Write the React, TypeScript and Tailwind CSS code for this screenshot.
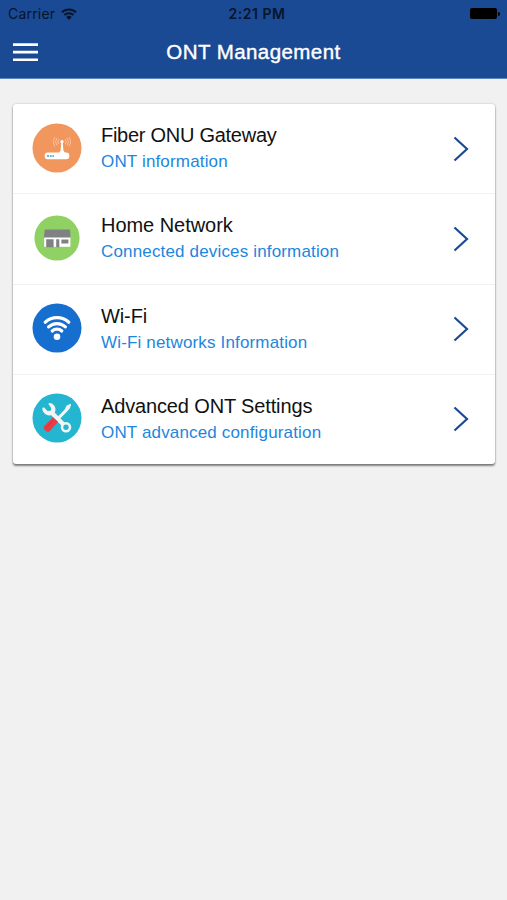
import type { ReactNode } from "react";

function WifiGlyph({ className }: { className: string }) {
  return (
    <svg viewBox="0 0 16 12" className={className} fill="none" stroke="currentColor" strokeWidth="2">
      <path d="M0.9 4.3a10.2 10.2 0 0 1 14.2 0" />
      <path d="M3.4 7a6.6 6.6 0 0 1 9.2 0" />
      <path d="M8 12 5.2 9.1a4 4 0 0 1 5.6 0z" fill="currentColor" stroke="none" />
    </svg>
  );
}

function RouterIcon() {
  return (
    <svg viewBox="0 0 50 50" className="size-[50px]">
      <circle cx="25" cy="25" r="24.5" fill="#f1965c" />
      <g fill="none" stroke="#fac7a5" strokeWidth="0.9">
        <path d="M26.8 16.2a4 4 0 0 0 0 5M33.2 16.2a4 4 0 0 1 0 5" />
        <path d="M24.9 15a6.4 6.4 0 0 0 0 7.4M35.1 15a6.4 6.4 0 0 1 0 7.4" />
        <path d="M23 14a8.6 8.6 0 0 0 0 9.4M37 14a8.6 8.6 0 0 1 0 9.4" />
      </g>
      <circle cx="30" cy="18.7" r="1.6" fill="#fff" />
      <path d="M29.3 19h1.4l.7 8.6 1.8 2.7h-6.4l1.8-2.7z" fill="#fff" />
      <rect x="12.7" y="29.6" width="24.6" height="6.6" rx="3" fill="#fff" />
      <path d="M15 32h2v1.9h-2z" fill="#5bbbe2" />
      <path d="M17.9 32h1.8v1.9h-1.8z" fill="#72a6da" />
      <path d="M20.3 32H22v1.9h-1.7z" fill="#7cc1c0" />
    </svg>
  );
}

function HouseIcon() {
  return (
    <svg viewBox="0 0 50 50" className="size-[50px]">
      <circle cx="25" cy="25" r="22.6" fill="#8fd163" />
      <path d="M12.2 24h26.2v9.8H12.2z" fill="#fff" />
      <path d="M12.7 16.5h25.3l.5 8H11.9z" fill="#808183" />
      <path d="M14.2 26.3h7.4v8h-7.4zM24.2 26.3h3.1v8h-3.1zM29.4 26.4h7v4h-7z" fill="#808183" />
    </svg>
  );
}

function WirelessIcon() {
  return (
    <svg viewBox="0 0 50 50" className="size-[50px]">
      <circle cx="25" cy="25" r="24.5" fill="#166fce" />
      <g fill="none" stroke="#fff" strokeWidth="3.2" strokeLinecap="round">
        <path d="M13.2 19.2a17.5 17.5 0 0 1 23.6 0" />
        <path d="M16.6 23.9a12.2 12.2 0 0 1 16.8 0" />
        <path d="M20.2 28a7 7 0 0 1 9.6 0" />
      </g>
      <circle cx="25" cy="33.7" r="3.3" fill="#fff" />
    </svg>
  );
}

function ToolsIcon() {
  return (
    <svg viewBox="0 0 50 50" className="size-[50px]">
      <circle cx="25" cy="25" r="24.5" fill="#24b5d0" />
      <path d="m18.5 18.5 14 14" stroke="#f3f4f5" strokeWidth="4.4" />
      <path
        d="M12.2 14.5c-.9-.3-1.9.1-1.9 1 .1 3.8 3.5 7 7.2 6.9 3.5 0 6-2.5 6-5.8 0-3.5-2.8-6.7-6.2-6.5-.8 0-1.1.8-.6 1.4l2.5 3.5-.5 2.7-3.3.4z"
        fill="#f3f4f5"
      />
      <circle cx="34" cy="34.2" r="4" fill="#24b5d0" stroke="#f3f4f5" strokeWidth="2.6" />
      <path d="M34.6 12.4 38.8 10.8 39 12l-1.2 3.4-3.2 3.6-8.8 8.9-2.1-2.1 8.8-9z" fill="#f3f4f5" />
      <path d="m21 24.2 5 4.5-8.1 9.2c-2.6 2.5-8.2-2-5.6-4.8z" fill="#e83d47" />
      <path d="m20.9 27.6-5.8 6.6" stroke="#cf303d" strokeWidth="1" />
    </svg>
  );
}

type Entry = {
  title: string;
  subtitle: string;
  icon: ReactNode;
  titleSpacing: string;
};

const entries: Entry[] = [
  { title: "Fiber ONU Gateway", subtitle: "ONT information", icon: <RouterIcon />, titleSpacing: "tracking-[-0.27px]" },
  { title: "Home Network", subtitle: "Connected devices information", icon: <HouseIcon />, titleSpacing: "tracking-[-0.04px]" },
  { title: "Wi-Fi", subtitle: "Wi-Fi networks Information", icon: <WirelessIcon />, titleSpacing: "tracking-[-0.1px]" },
  { title: "Advanced ONT Settings", subtitle: "ONT advanced configuration", icon: <ToolsIcon />, titleSpacing: "tracking-[-0.14px]" },
];

export default function App() {
  return (
    <div className="flex h-[900px] w-[507px] flex-col overflow-hidden bg-[#f1f1f1] font-['Liberation_Sans',Arial,sans-serif]">
      <header className="h-[79px] border-b border-[#5f83bd] bg-[#1b4a94]">
        <div className="grid h-[27px] grid-cols-[1fr_auto_1fr] items-center pr-[7px] pl-2 font-['Inter',sans-serif] text-[14px] text-[#06142c]">
          <div className="flex items-center gap-1.5">
            <span className="tracking-[0.2px]">Carrier</span>
            <WifiGlyph className="h-3 w-4" />
          </div>
          <span className="ml-[6px] text-center text-[14px] leading-[20px] font-semibold tracking-[0.5px]">2:21 PM</span>
          <div className="flex items-center justify-end gap-px">
            <div className="h-[11px] w-[27px] rounded-[2px] bg-black" />
            <div className="h-1 w-[2px] rounded-r-full bg-black" />
          </div>
        </div>
        <div className="grid h-[51px] grid-cols-[1fr_auto_1fr] items-center px-[13px]">
          <svg viewBox="0 0 25 19" className="h-[19px] w-[25px]" fill="#fff">
            <path d="M0 0.3h25v2.6H0zM0 7.8h25v2.6H0zM0 15.4h25V18H0z" />
          </svg>
          <h1 className="text-[20.5px] tracking-[0.43px] text-white [-webkit-text-stroke:0.4px_white]">ONT Management</h1>
        </div>
      </header>
      <main className="px-[13px] pt-[25px]">
        <div className="flex h-[360px] w-[482px] flex-col rounded-[3px] bg-white shadow-[0_2px_2px_0_rgba(0,0,0,0.45),0_0_2px_0_rgba(0,0,0,0.25)]">
          {entries.map((e) => (
            <div
              key={e.title}
              className="flex h-[90.3px] shrink-0 items-start border-b border-[#f1f1f1] pl-[19px] last:h-[88.8px] last:border-b-0"
            >
              <div className="mt-[18.5px]">{e.icon}</div>
              <div className="mt-[18px] ml-[19px] flex flex-1 flex-col gap-[3px] whitespace-nowrap">
                <div className={`text-[20px] leading-[26px] text-[#111111] ${e.titleSpacing}`}>{e.title}</div>
                <div className="text-[17px] leading-[22px] tracking-[0.16px] text-[#1d86de]">{e.subtitle}</div>
              </div>
              <svg viewBox="0 0 16 26" className="mt-[31.6px] mr-[26px] h-[26px] w-4">
                <path d="M1.5 1.5 14 13 1.5 24.5" fill="none" stroke="#1b4a94" strokeWidth="2.2" />
              </svg>
            </div>
          ))}
        </div>
      </main>
    </div>
  );
}
